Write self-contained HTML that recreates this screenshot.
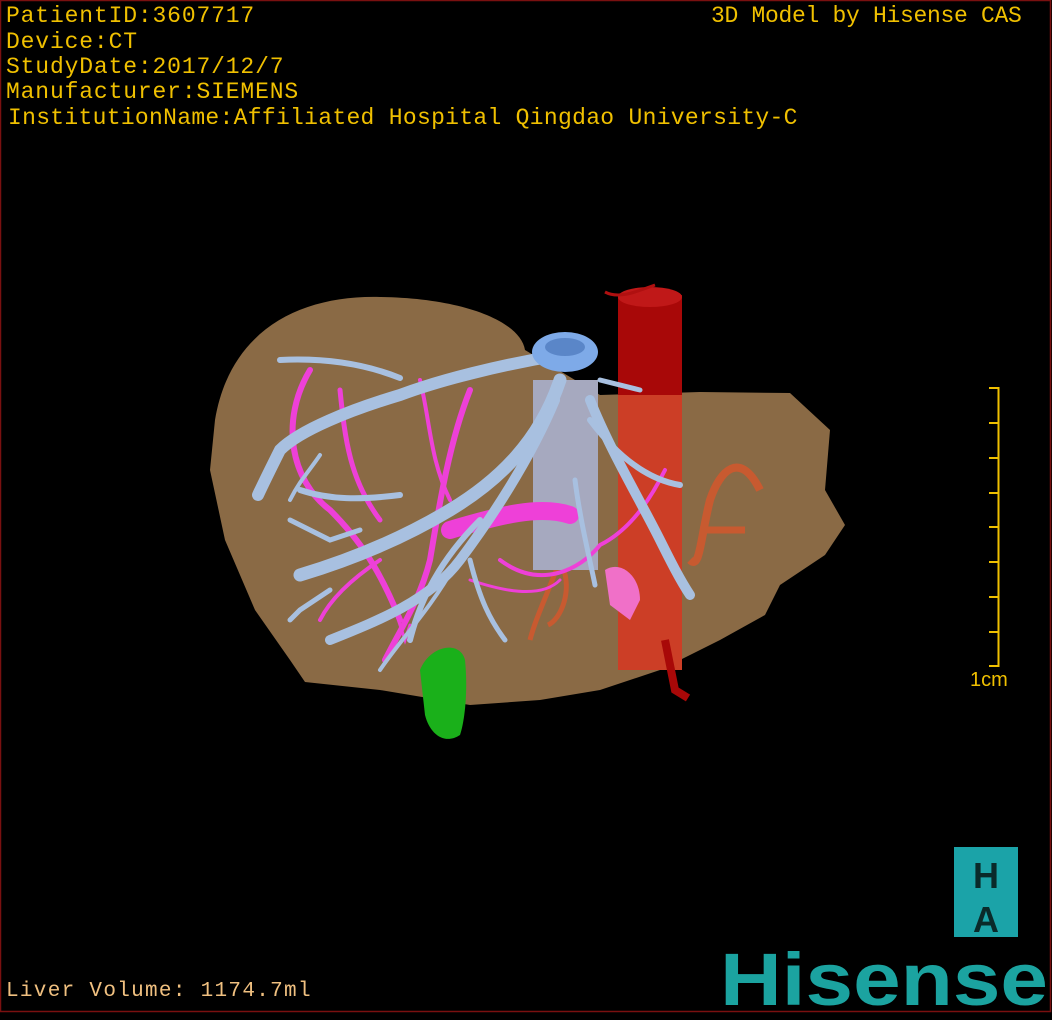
<!DOCTYPE html>
<html><head><style>
html,body{margin:0;padding:0;background:#000;}
#c{position:relative;width:1052px;height:1020px;background:#000;overflow:hidden;}
.t{position:absolute;font-family:"Liberation Mono",monospace;color:#f0c000;font-size:23px;white-space:pre;line-height:25px;letter-spacing:0.85px;}
</style></head><body><div id="c">
<svg width="1052" height="1020" style="position:absolute;left:0;top:0">
<rect x="0.5" y="0.5" width="1050" height="1011" fill="none" stroke="#7a1010" stroke-width="1.5"/>
<!-- liver -->
<path d="M215,420 C230,330 300,295 380,297 C460,298 520,320 525,350 L600,395 L700,392 L790,393 L830,430 L825,490 L845,525 L825,555 L780,585 L765,615 L720,640 L660,670 L600,690 L540,700 L470,705 L380,690 L305,682 L290,660 L255,610 L225,540 L210,470 Z" fill="#8a6a45"/>
<!-- red IVC -->
<rect x="618" y="295" width="64" height="375" fill="#a80808"/>
<ellipse cx="650" cy="297" rx="32" ry="10" fill="#c01818"/>
<rect x="618" y="395" width="64" height="275" fill="#d85030" opacity="0.75"/>
<path d="M665,640 L675,690 L688,698" stroke="#a80808" stroke-width="8" fill="none"/>
<path d="M605,292 C620,300 640,290 655,285" stroke="#b01010" stroke-width="3" fill="none"/>
<!-- orange arteries -->
<path d="M760,490 C740,450 720,470 710,500 C700,540 700,570 690,560" stroke="#c85a30" stroke-width="8" fill="none"/>
<path d="M700,530 L745,530" stroke="#c85a30" stroke-width="7"/>
<path d="M560,560 C545,600 535,620 530,640 M560,560 C575,590 560,620 548,625" stroke="#c85a30" stroke-width="5" fill="none"/>
<!-- green gallbladder -->
<path d="M420,670 C430,645 460,640 465,660 C468,690 465,720 460,735 C445,745 430,735 425,715 Z" fill="#1ab01a"/>
<!-- grey cylinder -->
<rect x="533" y="380" width="65" height="190" fill="#a6a9bf"/>
<!-- magenta vessels -->
<g stroke="#ee40d8" fill="none" stroke-linecap="round">
<path d="M450,530 C500,515 540,505 570,515" stroke-width="18"/>
<path d="M310,370 C280,420 290,480 330,510 C360,540 380,570 400,620" stroke-width="6"/>
<path d="M340,390 C345,440 350,480 380,520" stroke-width="5"/>
<path d="M470,390 C450,440 440,500 430,560 C420,600 400,630 385,660" stroke-width="6"/>
<path d="M420,380 C430,420 430,460 450,500" stroke-width="4"/>
<path d="M500,560 C540,590 580,570 600,545 C630,530 650,500 665,470" stroke-width="4"/>
<path d="M470,580 C500,590 540,600 560,580" stroke-width="3"/>
<path d="M380,560 C350,580 330,600 320,620" stroke-width="4"/>
<path d="M395,610 L405,640 L410,625" stroke-width="3"/>
</g>
<path d="M605,570 C620,560 640,575 640,600 L630,620 L610,605 Z" fill="#f070c8"/>
<!-- blue hepatic veins -->
<g stroke="#a8c0e0" fill="none" stroke-linecap="round">
<path d="M560,355 C500,365 440,380 400,395 C350,410 300,430 280,450 C270,470 265,480 258,495" stroke-width="12"/>
<path d="M560,380 C540,440 500,480 450,510 C400,540 350,560 300,575" stroke-width="13"/>
<path d="M555,400 C530,460 490,520 460,560 C430,600 380,620 330,640" stroke-width="10"/>
<path d="M480,520 C440,560 420,600 410,640" stroke-width="6"/>
<path d="M590,400 C610,450 640,500 660,540 C670,560 680,580 690,595" stroke-width="10"/>
<path d="M590,420 C620,460 650,480 680,485" stroke-width="6"/>
<path d="M575,480 C580,520 590,560 595,585" stroke-width="5"/>
<path d="M470,560 C480,600 490,620 505,640" stroke-width="5"/>
<path d="M455,565 C430,610 400,640 380,670" stroke-width="4"/>
<path d="M280,360 C320,358 360,362 400,378" stroke-width="6"/>
<path d="M300,490 C330,500 360,500 400,495" stroke-width="6"/>
<path d="M320,455 C310,470 300,480 290,500" stroke-width="4"/>
<path d="M290,520 L330,540 L360,530" stroke-width="5"/>
<path d="M330,590 L300,610 L290,620" stroke-width="5"/>
<path d="M600,380 L640,390" stroke-width="5"/>
</g>
<ellipse cx="565" cy="352" rx="33" ry="20" fill="#7eaae8"/>
<ellipse cx="565" cy="347" rx="20" ry="9" fill="#5a86c8"/>
<!-- scale bar -->
<g stroke="#f0c000" stroke-width="2">
<line x1="998.5" y1="387" x2="998.5" y2="667"/>
<line x1="989" y1="388" x2="999" y2="388"/>
<line x1="989" y1="423" x2="999" y2="423"/>
<line x1="989" y1="458" x2="999" y2="458"/>
<line x1="989" y1="493" x2="999" y2="493"/>
<line x1="989" y1="527" x2="999" y2="527"/>
<line x1="989" y1="562" x2="999" y2="562"/>
<line x1="989" y1="597" x2="999" y2="597"/>
<line x1="989" y1="632" x2="999" y2="632"/>
<line x1="989" y1="666" x2="999" y2="666"/>
</g>
<text x="970" y="686" font-family="Liberation Sans,sans-serif" font-size="20" fill="#f0c000">1cm</text>
<!-- HA logo -->
<rect x="954" y="847" width="64" height="90" fill="#1ba3a8"/>
<text x="986" y="888" text-anchor="middle" font-family="Liberation Sans,sans-serif" font-weight="bold" font-size="36" fill="#0a2a2a">H</text>
<text x="986" y="932" text-anchor="middle" font-family="Liberation Sans,sans-serif" font-weight="bold" font-size="36" fill="#0a2a2a">A</text>
<text x="720" y="1005" font-family="Liberation Sans,sans-serif" font-weight="bold" font-size="74" fill="#1ba3a0" textLength="328" lengthAdjust="spacingAndGlyphs">Hisense</text>
</svg>
<div class="t" style="left:6px;top:4px">PatientID:3607717</div>
<div class="t" style="left:6px;top:30px">Device:CT</div>
<div class="t" style="left:6px;top:55px">StudyDate:2017/12/7</div>
<div class="t" style="left:6px;top:80px">Manufacturer:SIEMENS</div>
<div class="t" style="left:8px;top:106px;letter-spacing:0.3px">InstitutionName:Affiliated Hospital Qingdao University-C</div>
<div class="t" style="left:711px;top:4px;letter-spacing:-0.3px">3D Model by Hisense CAS</div>
<div class="t" style="left:6px;top:979px;color:#f0c080;font-size:21px;letter-spacing:1.3px">Liver Volume: 1174.7ml</div>
</div></body></html>
